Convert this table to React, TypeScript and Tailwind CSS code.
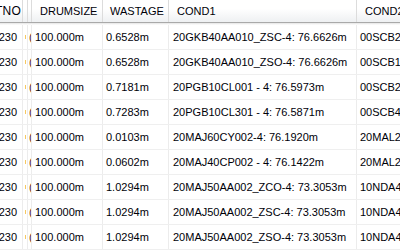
import React from "react";

const rows = [
  ["0.6528m", "20GKB40AA010_ZSC-4: 76.6626m", "00SCB20CL001"],
  ["0.6528m", "20GKB40AA010_ZSO-4: 76.6626m", "00SCB10CL001"],
  ["0.7181m", "20PGB10CL001 - 4: 76.5973m", "00SCB20CL001"],
  ["0.7283m", "20PGB10CL301 - 4: 76.5871m", "00SCB40CL001"],
  ["0.0103m", "20MAJ60CY002-4: 76.1920m", "20MAL20CY001"],
  ["0.0602m", "20MAJ40CP002 - 4: 76.1422m", "20MAL20CP001"],
  ["1.0294m", "20MAJ50AA002_ZCO-4: 73.3053m", "10NDA40AA001"],
  ["1.0294m", "20MAJ50AA002_ZSC-4: 73.3053m", "10NDA40AA001"],
  ["1.0294m", "20MAJ50AA002_ZSO-4: 73.3053m", "10NDA40AA001"],
  ["1.0294m", "20MAJ50AA002_ZSO-4: 73.3053m", "10NDA40AA001"],
];

const cols = "grid grid-cols-[23px_5px_4px_71px_66px_188px_1fr]";

export default function App() {
  return (
    <div
      className="w-[400px] h-[250px] overflow-hidden bg-white text-[11px] text-[#000008]"
      style={{ fontFamily: '"Liberation Sans", Arial, sans-serif' }}
    >
      <div className="border-b border-[#a9a9a9]">
        <div className={`${cols} h-[22px] bg-gradient-to-b from-white from-40% to-[#eef0f2]`}>
          <div className="flex items-center justify-end pr-[1px] border-r border-[#dcdcdc] overflow-hidden whitespace-nowrap">
            <span className="text-[12px] tracking-[0.2px]">TNO</span>
          </div>
          <div className="border-r border-[#dcdcdc]" />
          <div className="border-r border-[#dcdcdc]" />
          <div className="flex items-center pl-[8px] border-r border-[#dcdcdc] overflow-hidden whitespace-nowrap">
            DRUMSIZE
          </div>
          <div className="flex items-center pl-[7px] border-r border-[#dcdcdc] overflow-hidden whitespace-nowrap">
            WASTAGE
          </div>
          <div className="flex items-center pl-[8px] border-r border-[#dcdcdc] overflow-hidden whitespace-nowrap">
            COND1
          </div>
          <div className="flex items-center pl-[8px] overflow-hidden whitespace-nowrap">
            COND2
          </div>
        </div>
      </div>
      <div className="h-[2px] bg-gradient-to-b from-[#e4e4e4] to-white" />
      {rows.map((r, i) => (
        <div key={i} className={`${cols} h-[25px] border-b border-[#efefef]`}>
          <div className="flex items-center justify-end pr-[5px] border-r border-[#ececec] overflow-hidden whitespace-nowrap">
            230
          </div>
          <div className="flex items-center border-r border-[#ececec] overflow-hidden">
            <div className="ml-[2px] w-[1px] h-[4px] bg-[#f6c860]" />
          </div>
          <div className="flex items-center border-r border-[#ececec] overflow-hidden whitespace-nowrap">
            <span className="ml-[1px] text-[#4a2020]">(</span>
          </div>
          <div className="flex items-center pl-[3px] border-r border-[#ececec] overflow-hidden whitespace-nowrap">
            100.000m
          </div>
          <div className="flex items-center pl-[3px] border-r border-[#ececec] overflow-hidden whitespace-nowrap">
            {r[0]}
          </div>
          <div className="flex items-center pl-[4px] border-r border-[#ececec] overflow-hidden whitespace-nowrap">
            {r[1]}
          </div>
          <div className="flex items-center pl-[3px] overflow-hidden whitespace-nowrap">
            {r[2]}
          </div>
        </div>
      ))}
    </div>
  );
}
